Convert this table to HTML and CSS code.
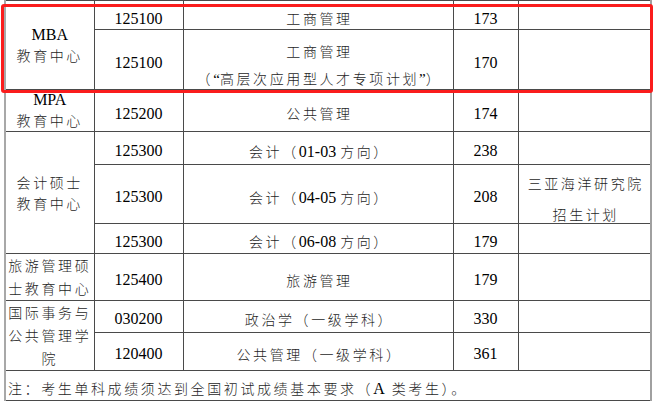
FILE: index.html
```html
<!DOCTYPE html>
<html lang="zh-CN">
<head>
<meta charset="utf-8">
<title>招生计划</title>
<link rel="stylesheet" href="styles.css">
</head>
<body>
<div class="page">
  <table class="grid">
    <colgroup>
      <col class="w1"><col class="w2"><col class="w3"><col class="w4"><col class="w5">
    </colgroup>
    <tbody>
      <tr class="r1">
        <td rowspan="2" class="unit"><span class="en">MBA</span><br><span class="c">教育中心</span></td>
        <td class="num first">125100</td>
        <td class="name first"><span class="c">工商管理</span></td>
        <td class="num first">173</td>
        <td class="note"></td>
      </tr>
      <tr class="r2">
        <td class="num">125100</td>
        <td class="name tall"><div class="stack27"><span class="c">工商管理</span><br><span class="c">（</span><span class="q">“</span><span class="c">高层次应用型人才专项计划</span><span class="q">”</span><span class="c">）</span></div></td>
        <td class="num">170</td>
        <td class="note"></td>
      </tr>
      <tr class="r3">
        <td class="unit"><span class="en">MPA</span><br><span class="c">教育中心</span></td>
        <td class="num">125200</td>
        <td class="name"><span class="c">公共管理</span></td>
        <td class="num">174</td>
        <td class="note"></td>
      </tr>
      <tr class="r4">
        <td rowspan="3" class="unit"><span class="c">会计硕士</span><br><span class="c">教育中心</span></td>
        <td class="num">125300</td>
        <td class="name"><span class="c">会计（</span>01-03 <span class="c">方向）</span></td>
        <td class="num">238</td>
        <td class="note"></td>
      </tr>
      <tr class="r5">
        <td class="num">125300</td>
        <td class="name"><span class="c">会计（</span>04-05 <span class="c">方向）</span></td>
        <td class="num">208</td>
        <td class="note spaced"><div class="stack30"><span class="c">三亚海洋研究院</span><br><span class="c">招生计划</span></div></td>
      </tr>
      <tr class="r6">
        <td class="num">125300</td>
        <td class="name"><span class="c">会计（</span>06-08 <span class="c">方向）</span></td>
        <td class="num">179</td>
        <td class="note"></td>
      </tr>
      <tr class="r7">
        <td class="unit wrap"><span class="c">旅游管理硕士教育中心</span></td>
        <td class="num">125400</td>
        <td class="name"><span class="c">旅游管理</span></td>
        <td class="num">179</td>
        <td class="note"></td>
      </tr>
      <tr class="r8">
        <td rowspan="2" class="unit wrap"><span class="c">国际事务与公共管理学院</span></td>
        <td class="num">030200</td>
        <td class="name"><span class="c">政治学（一级学科）</span></td>
        <td class="num">330</td>
        <td class="note"></td>
      </tr>
      <tr class="r9">
        <td class="num">120400</td>
        <td class="name"><span class="c">公共管理（一级学科）</span></td>
        <td class="num">361</td>
        <td class="note"></td>
      </tr>
      <tr class="r10">
        <td colspan="5" class="foot"><span class="c">注：考生单科成绩须达到全国初试成绩基本要求（</span><span class="en gap">A</span><span class="c">类考生）。</span></td>
      </tr>
    </tbody>
  </table>
  <div class="highlight"></div>
</div>
</body>
</html>
```

FILE: styles.css
```css
html, body {
  margin: 0;
  padding: 0;
  background: #ffffff;
}

.page {
  position: relative;
  width: 654px;
  height: 401px;
  overflow: hidden;
}

.grid {
  margin-left: 4px;
  border-collapse: collapse;
  table-layout: fixed;
  width: 646px;
  border-left: 2px solid #a8a8a8;
  border-right: 2px solid #a0a0a0;
  font-family: "Liberation Serif", "Noto Sans CJK SC", serif;
  font-size: 16px;
  color: #000;
}

.w1 { width: 89px; }
.w2 { width: 89px; }
.w3 { width: 270px; }
.w4 { width: 65px; }
.w5 { width: 133px; }

.grid td {
  border: 1px solid #4a4a4a;
  padding: 6px 0 0 0;
  text-align: center;
  vertical-align: middle;
  line-height: 20px;
}

.grid td.first {
  padding-top: 7px;
}

.r1 { height: 29px; }
.r2 { height: 60px; }
.r3 { height: 42px; }
.r4 { height: 33px; }
.r5 { height: 59px; }
.r6 { height: 30px; }
.r7 { height: 46px; }
.r8 { height: 31px; }
.r9 { height: 37px; }
.r10 { height: 30px; }

.c {
  font-family: "Noto Sans CJK SC", sans-serif;
  font-size: 14px;
  font-weight: 300;
  letter-spacing: 2.6px;
  color: #1e1e1e;
}

.q {
  font-family: "Liberation Serif", serif;
  font-size: 15px;
}

.en {
  font-family: "Liberation Serif", serif;
  font-size: 16px;
}

.gap {
  margin-right: 7px;
}

.grid td.unit {
  padding: 0;
  line-height: 20px;
}

.grid td.unit.wrap {
  line-height: 22px;
  padding: 0;
}

.grid td.name {
  padding-left: 3px;
}

.grid td.tall {
  padding: 7px 0 0 3px;
}

.stack27 {
  height: 51px;
  line-height: 27px;
}

.grid td.spaced {
  padding: 2px 0 0 3px;
}

.stack30 {
  height: 54px;
  line-height: 30px;
}

.grid td.foot {
  text-align: left;
  padding: 5px 0 0 2px;
}

.highlight {
  position: absolute;
  left: 1px;
  top: 4px;
  width: 652px;
  height: 89px;
  box-sizing: border-box;
  border: 3px solid #fa1c1c;
  border-radius: 3px;
}
```
